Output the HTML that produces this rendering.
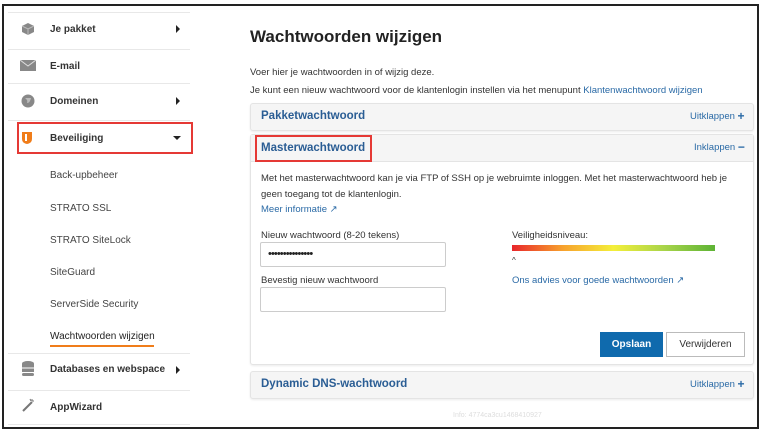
<!DOCTYPE html>
<html><head><meta charset="utf-8"><style>
*{margin:0;padding:0;box-sizing:border-box}
body{width:764px;height:432px;background:#fff;font-family:"Liberation Sans",sans-serif;position:relative;overflow:hidden;color:#333}
.a{position:absolute;white-space:nowrap}
.frame{position:absolute;left:2px;top:4px;width:757px;height:425px;border:2px solid #222;border-right-width:2px}
.sep{position:absolute;left:8px;width:182px;height:1px;background:#e8e8e8}
.nav{position:absolute;left:50px;font-size:10px;font-weight:bold;color:#333}
.sub{position:absolute;left:50px;font-size:10px;color:#444}
.arr{position:absolute;left:176px;width:0;height:0;border-top:4px solid transparent;border-bottom:4px solid transparent;border-left:4px solid #222}
.panel{position:absolute;left:250px;width:504px;border:1px solid #e4e4e4;border-radius:3px;background:#f5f5f5;box-shadow:0 1px 2px rgba(0,0,0,.08)}
.ph{font-size:11.5px;font-weight:bold;color:#2a5d94}
.blue{color:#2a6aa6}
.small{font-size:9.5px}
.inp{position:absolute;left:260px;width:186px;height:25px;border:1px solid #ccc;border-radius:2px;background:#fff}
.pl{font-size:12px;font-weight:bold;line-height:9px;vertical-align:-1px}
</style></head><body>
<div class="frame"></div>
<div class="sep" style="top:12px"></div>
<svg class="a" style="left:21px;top:22px" width="14" height="14" viewBox="0 0 14 14"><path d="M7 1L13 4V10L7 13L1 10V4Z" fill="#888"/><path d="M1 4L7 7L13 4M7 7V13" stroke="#bbb" fill="none"/></svg>
<div class="nav" style="top:24px">Je pakket</div><div class="arr" style="top:25px"></div>
<div class="sep" style="top:49px"></div>
<svg class="a" style="left:20px;top:60px" width="16" height="11"><rect width="16" height="11" fill="#888"/><path d="M0 0L8 6L16 0" stroke="#ddd" fill="none"/></svg>
<div class="nav" style="top:61px">E-mail</div>
<div class="sep" style="top:83px"></div>
<svg class="a" style="left:21px;top:94px" width="14" height="14"><circle cx="7" cy="7" r="6.5" fill="#888"/><path d="M4 4Q7 6 6 9Q9 9 10 4" fill="#bbb"/></svg>
<div class="nav" style="top:96px">Domeinen</div><div class="arr" style="top:97px"></div>
<div class="sep" style="top:120px"></div>
<div class="a" style="left:17px;top:122px;width:176px;height:32px;border:2px solid #e53935"></div>
<svg class="a" style="left:21px;top:131px" width="12" height="14"><path d="M1 1H11V8Q11 12 6 13Q1 12 1 8Z" fill="#f07d1a"/><path d="M5 3V10" stroke="#fff" stroke-width="2"/></svg>
<div class="nav" style="top:133px">Beveiliging</div>
<div class="a" style="left:173px;top:136px;border-left:4px solid transparent;border-right:4px solid transparent;border-top:4px solid #222"></div>
<div class="sub" style="top:170px">Back-upbeheer</div>
<div class="sub" style="top:203px">STRATO SSL</div>
<div class="sub" style="top:235px">STRATO SiteLock</div>
<div class="sub" style="top:267px">SiteGuard</div>
<div class="sub" style="top:299px">ServerSide Security</div>
<div class="sub" style="top:331px;color:#222">Wachtwoorden wijzigen</div>
<div class="a" style="left:50px;top:345px;width:104px;height:2px;background:#f07d1a"></div>
<div class="sep" style="top:353px"></div>
<svg class="a" style="left:22px;top:361px" width="12" height="15"><ellipse cx="6" cy="2.5" rx="6" ry="2.5" fill="#888"/><rect y="3" width="12" height="3.5" fill="#888"/><rect y="7.5" width="12" height="3.5" fill="#888"/><rect y="12" width="12" height="3" rx="1.5" fill="#888"/></svg>
<div class="nav" style="top:364px">Databases en webspace</div><div class="arr" style="top:366px"></div>
<div class="sep" style="top:390px"></div>
<svg class="a" style="left:21px;top:398px" width="14" height="14"><path d="M2 13L11 4" stroke="#777" stroke-width="2"/><path d="M11 1V3M13 3H11M9 1L10 3" stroke="#777"/></svg>
<div class="nav" style="top:402px">AppWizard</div>
<div class="sep" style="top:424px"></div>
<div class="a" style="left:250px;top:27px;font-size:17px;font-weight:bold;color:#222">Wachtwoorden wijzigen</div>
<div class="a small" style="left:250px;top:67px">Voer hier je wachtwoorden in of wijzig deze.</div>
<div class="a small" style="left:250px;top:85px">Je kunt een nieuw wachtwoord voor de klantenlogin instellen via het menupunt <span class="blue">Klantenwachtwoord wijzigen</span></div>
<div class="panel" style="top:103px;height:28px"></div>
<div class="a ph" style="left:261px;top:110px">Pakketwachtwoord</div>
<div class="a small blue" style="left:690px;top:111px">Uitklappen <span class="pl">+</span></div>
<div class="panel" style="top:134px;height:231px;background:#fff"></div>
<div class="a" style="left:251px;top:135px;width:502px;height:27px;background:#f5f5f5;border-bottom:1px solid #e4e4e4"></div>
<div class="a" style="left:255px;top:135px;width:117px;height:27px;border:2px solid #e53935"></div>
<div class="a ph" style="left:261px;top:142px">Masterwachtwoord</div>
<div class="a small blue" style="left:694px;top:142px">Inklappen <span class="pl">&minus;</span></div>
<div class="a small" style="left:261px;top:171px;line-height:16px">Met het masterwachtwoord kan je via FTP of SSH op je webruimte inloggen. Met het masterwachtwoord heb je<br>geen toegang tot de klantenlogin.</div>
<div class="a small blue" style="left:261px;top:204px">Meer informatie &#x2197;</div>
<div class="a small" style="left:261px;top:230px">Nieuw wachtwoord (8-20 tekens)</div>
<div class="inp" style="top:242px"></div>
<div class="a" style="left:268px;top:248px;font-size:11px;letter-spacing:-0.9px;color:#222">&bull;&bull;&bull;&bull;&bull;&bull;&bull;&bull;&bull;&bull;&bull;&bull;&bull;&bull;&bull;</div>
<div class="a small" style="left:261px;top:275px">Bevestig nieuw wachtwoord</div>
<div class="inp" style="top:287px"></div>
<div class="a small" style="left:512px;top:230px">Veiligheidsniveau:</div>
<div class="a" style="left:512px;top:245px;width:203px;height:6px;background:linear-gradient(90deg,#e8262b,#f7a12d 25%,#f4ef3a 50%,#a8d44a 75%,#5db335)"></div>
<div class="a" style="left:512px;top:256px;font-size:8px">^</div>
<div class="a small blue" style="left:512px;top:275px">Ons advies voor goede wachtwoorden &#x2197;</div>
<div class="a" style="left:600px;top:332px;width:63px;height:25px;background:#0f6aad;color:#fff;font-size:10px;font-weight:bold;text-align:center;line-height:25px">Opslaan</div>
<div class="a" style="left:666px;top:332px;width:79px;height:25px;border:1px solid #bbb;background:#fff;font-size:10px;text-align:center;line-height:23px;color:#333">Verwijderen</div>
<div class="panel" style="top:371px;height:28px"></div>
<div class="a ph" style="left:261px;top:378px">Dynamic DNS-wachtwoord</div>
<div class="a small blue" style="left:690px;top:379px">Uitklappen <span class="pl">+</span></div>
<div class="a" style="left:453px;top:412px;font-size:7px;color:#ddd">Info: 4774ca3cu1468410927</div>
</body></html>
